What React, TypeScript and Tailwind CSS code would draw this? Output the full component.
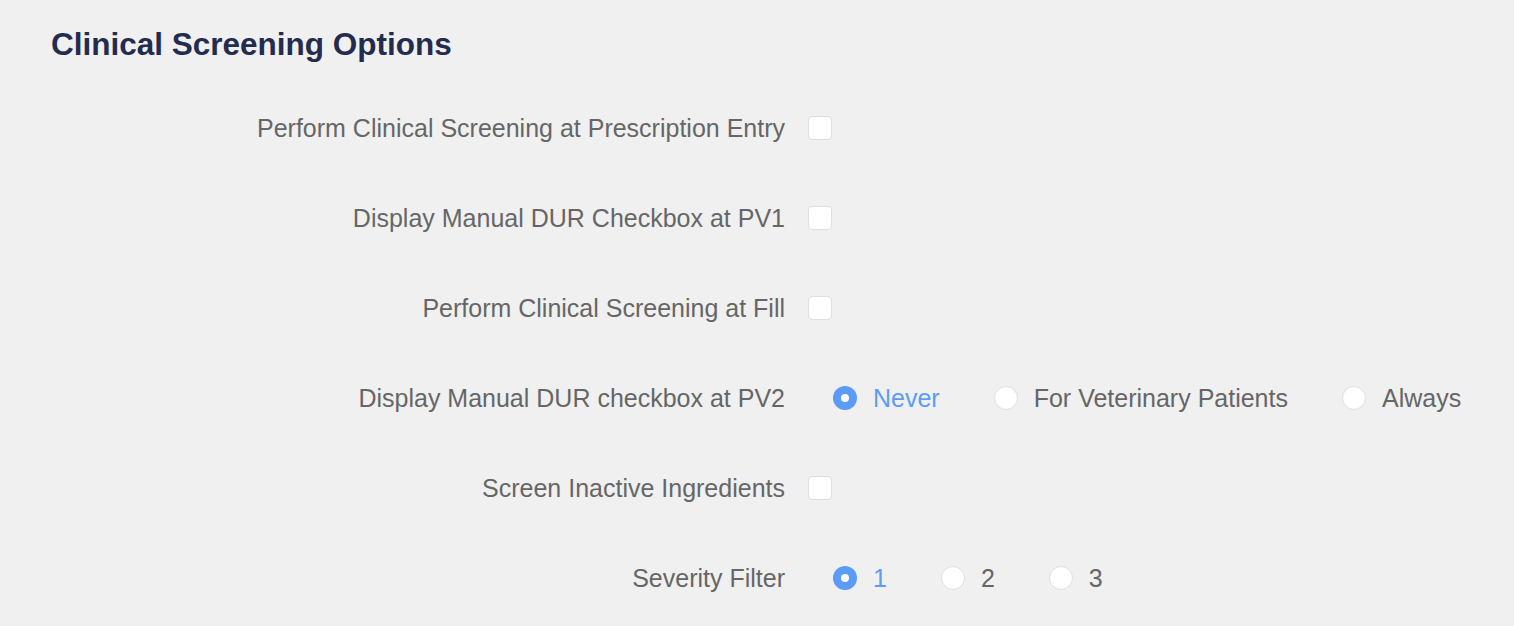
import React, { useState } from 'react';

type Row =
  | { kind: 'check'; label: string }
  | { kind: 'radio'; label: string; options: string[] };

const ROWS: Row[] = [
  { kind: 'check', label: 'Perform Clinical Screening at Prescription Entry' },
  { kind: 'check', label: 'Display Manual DUR Checkbox at PV1' },
  { kind: 'check', label: 'Perform Clinical Screening at Fill' },
  { kind: 'radio', label: 'Display Manual DUR checkbox at PV2', options: ['Never', 'For Veterinary Patients', 'Always'] },
  { kind: 'check', label: 'Screen Inactive Ingredients' },
  { kind: 'radio', label: 'Severity Filter', options: ['1', '2', '3'] },
];

const Checkbox = () => (
  <div className="w-6 h-6 shrink-0 rounded-[4px] bg-white border border-[#dedee4]" />
);

const RadioGroup = ({ options }: { options: string[] }) => {
  const [value, setValue] = useState(options[0]);
  return (
    <div className="flex items-center">
      {options.map(option => {
        const selected = option === value;
        return (
          <button
            key={option}
            onClick={() => setValue(option)}
            className="flex items-center shrink-0 mr-[54px] cursor-pointer"
          >
            {selected ? (
              <span className="w-6 h-6 shrink-0 rounded-full bg-[#5b9cf6] flex items-center justify-center">
                <span className="w-2 h-2 rounded-full bg-white" />
              </span>
            ) : (
              <span className="w-6 h-6 shrink-0 rounded-full bg-white border border-[#dedee4]" />
            )}
            <span
              className={`ml-4 text-[25px] leading-none whitespace-nowrap ${selected ? 'text-[#5b9cf6]' : 'text-[#666666]'}`}
            >
              {option}
            </span>
          </button>
        );
      })}
    </div>
  );
};

export default function App() {
  return (
    <div className="min-h-screen bg-[#f0f0f0] font-['Liberation_Sans',Arial,sans-serif]">
      <div className="pt-[24px] pl-[51px]">
        <h1 className="text-[31.5px] font-bold text-[#232c4e] leading-[40px]">Clinical Screening Options</h1>
      </div>
      <div className="mt-[52px] flex flex-col gap-[66px]">
        {ROWS.map(row => (
          <div key={row.label} className="flex items-center h-6">
            <div className="w-[785px] shrink-0 text-right text-[25px] leading-none text-[#666666] whitespace-nowrap">
              {row.label}
            </div>
            <div className={row.kind === 'check' ? 'ml-[23px]' : 'ml-[48px]'}>
              {row.kind === 'check' ? <Checkbox /> : <RadioGroup options={row.options} />}
            </div>
          </div>
        ))}
      </div>
    </div>
  );
}
